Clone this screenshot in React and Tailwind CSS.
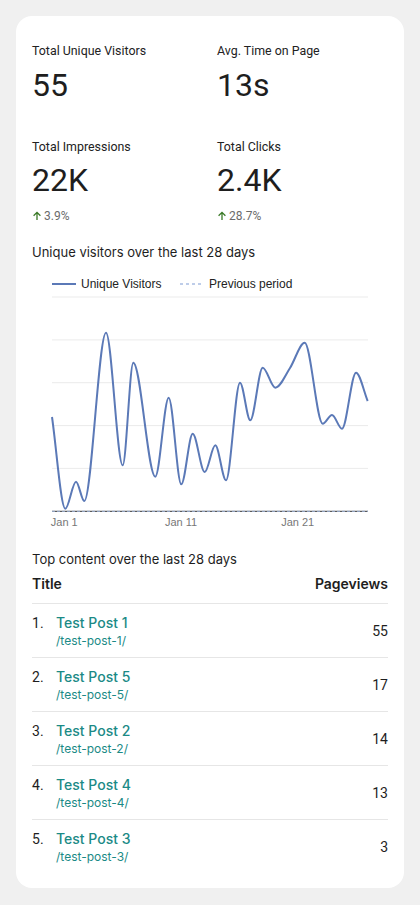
import React from 'react';

const stats = [
  { label: 'Total Unique Visitors', value: '55' },
  { label: 'Avg. Time on Page', value: '13s' },
  { label: 'Total Impressions', value: '22K', change: '3.9%' },
  { label: 'Total Clicks', value: '2.4K', change: '28.7%' },
];

const posts = [
  { title: 'Test Post 1', slug: '/test-post-1/', views: 55 },
  { title: 'Test Post 5', slug: '/test-post-5/', views: 17 },
  { title: 'Test Post 2', slug: '/test-post-2/', views: 14 },
  { title: 'Test Post 4', slug: '/test-post-4/', views: 13 },
  { title: 'Test Post 3', slug: '/test-post-3/', views: 3 },
];

// curve points, chart coords
const pts = [
  [20, 145], [33.3, 236.7], [44, 209.7], [52.3, 229], [74, 60.7], [90.7, 193.3],
  [101.3, 90.7], [123.3, 204.7], [136.7, 125.7], [149.3, 212.3], [160.7, 161.7],
  [172.7, 200], [183.3, 173.3], [194, 208.3], [208, 110.7], [218.3, 148.3],
  [230.7, 95.7], [243.3, 115.7], [258, 96], [272.7, 70.7], [290.7, 151.7],
  [300, 143], [310, 156.7], [324, 100.7], [335.7, 129],
];

function smoothPath(p) {
  const n = p.length;
  const slope = (i) => {
    if (i === 0) return (p[1][1] - p[0][1]) / (p[1][0] - p[0][0]);
    if (i === n - 1) return (p[n - 1][1] - p[n - 2][1]) / (p[n - 1][0] - p[n - 2][0]);
    const a = p[i][1] - p[i - 1][1];
    const b = p[i + 1][1] - p[i][1];
    if (a * b <= 0) return 0;
    return (p[i + 1][1] - p[i - 1][1]) / (p[i + 1][0] - p[i - 1][0]);
  };
  let d = `M${p[0][0]},${p[0][1]}`;
  for (let i = 0; i < n - 1; i++) {
    const dx = (p[i + 1][0] - p[i][0]) / 3;
    const s0 = slope(i);
    const s1 = slope(i + 1);
    d += ` C${p[i][0] + dx},${p[i][1] + s0 * dx} ${p[i + 1][0] - dx},${p[i + 1][1] - s1 * dx} ${p[i + 1][0]},${p[i + 1][1]}`;
  }
  return d;
}

const grid = [25, 67.9, 110.7, 153.6, 196.4];

const ArrowUp = () => (
  <svg width="10" height="10" viewBox="0 0 10 10" className="mr-[2px]">
    <path d="M5 9V1.5M1.6 4.8L5 1.4l3.4 3.4" stroke="#3b7a27" strokeWidth="1.3" fill="none" />
  </svg>
);

const VisitorsChart = () => (
  <svg width="356" height="260" viewBox="0 0 356 260" className="block">
    <line x1="20" y1="12" x2="44" y2="12" stroke="#5b79b7" strokeWidth="2" />
    <text x="49" y="16" fontSize="12" fill="#222" fontFamily="Liberation Sans, Arial, sans-serif">Unique Visitors</text>
    <line x1="148" y1="12" x2="172" y2="12" stroke="#a9bde2" strokeWidth="1.3" strokeDasharray="3 3" />
    <text x="177" y="16" fontSize="12" fill="#222" fontFamily="Liberation Sans, Arial, sans-serif">Previous period</text>
    {grid.map((y) => (
      <line key={y} x1="20" y1={y} x2="336" y2={y} stroke="#ebebeb" strokeWidth="1" />
    ))}
    <line x1="20" y1="239.3" x2="336" y2="239.3" stroke="#333" strokeWidth="1" />
    <line x1="20" y1="239.3" x2="336" y2="239.3" stroke="#9fb3d8" strokeWidth="1" strokeDasharray="3 2" />
    <path d={smoothPath(pts)} stroke="#5b79b7" strokeWidth="2" fill="none" strokeLinejoin="round" />
    {[['Jan 1', 32.3], ['Jan 11', 149], ['Jan 21', 265.7]].map(([t, x]) => (
      <text key={t} x={x} y="254" fontSize="11" fill="#777" textAnchor="middle" fontFamily="Liberation Sans, Arial, sans-serif">{t}</text>
    ))}
  </svg>
);

export default function App() {
  return (
    <div className="min-h-screen bg-[#f0f0f0] p-4">
      <div className="bg-white rounded-2xl px-4 pt-[27px] pb-[15px] text-[#1e1e1e]">
        <div className="grid grid-cols-2 gap-x-[14px] gap-y-[34px] font-['Roboto',sans-serif]">
          {stats.map((s) => (
            <div key={s.label}>
              <div className="text-[12.4px] leading-4 text-[#222]">{s.label}</div>
              <div className="mt-[5.5px] text-[32px] leading-10 text-[#1e1e1e]">{s.value}</div>
              {s.change && (
                <div className="mt-2 flex items-center text-[12px] leading-4 text-[#6b6b6b]">
                  <ArrowUp />
                  {s.change}
                </div>
              )}
            </div>
          ))}
        </div>

        <div className="mt-[19px] font-['Inter',sans-serif] text-[13px] leading-[18px] text-[#1e1e1e]">
          Unique visitors over the last 28 days
        </div>
        <div className="mt-[11px]">
          <VisitorsChart />
        </div>

        <div className="mt-[18px] font-['Inter',sans-serif] text-[13px] leading-[18px] text-[#1e1e1e]">
          Top content over the last 28 days
        </div>
        <div className="mt-[2px] font-['Inter',sans-serif]">
          <div className="flex justify-between items-center pt-[4px] pb-[9px] text-[14px] leading-5 font-semibold text-[#1e1e1e]">
            <span>Title</span>
            <span>Pageviews</span>
          </div>
          {posts.map((p, i) => (
            <div key={p.slug} className="flex items-center border-t border-[#e6e6e6] py-[8.5px]">
              <div className="w-6 self-start text-[14px] leading-5 font-['Roboto',sans-serif] text-[#1e1e1e]">{i + 1}.</div>
              <div className="flex-1 min-w-0">
                <div className="text-[14px] leading-5 font-medium text-[#1b8a86]">{p.title}</div>
                <div className="text-[12px] leading-4 text-[#1b8a86]">{p.slug}</div>
              </div>
              <div className="text-[14px] leading-5 font-['Roboto',sans-serif] text-[#1e1e1e]">{p.views}</div>
            </div>
          ))}
        </div>
      </div>
    </div>
  );
}
